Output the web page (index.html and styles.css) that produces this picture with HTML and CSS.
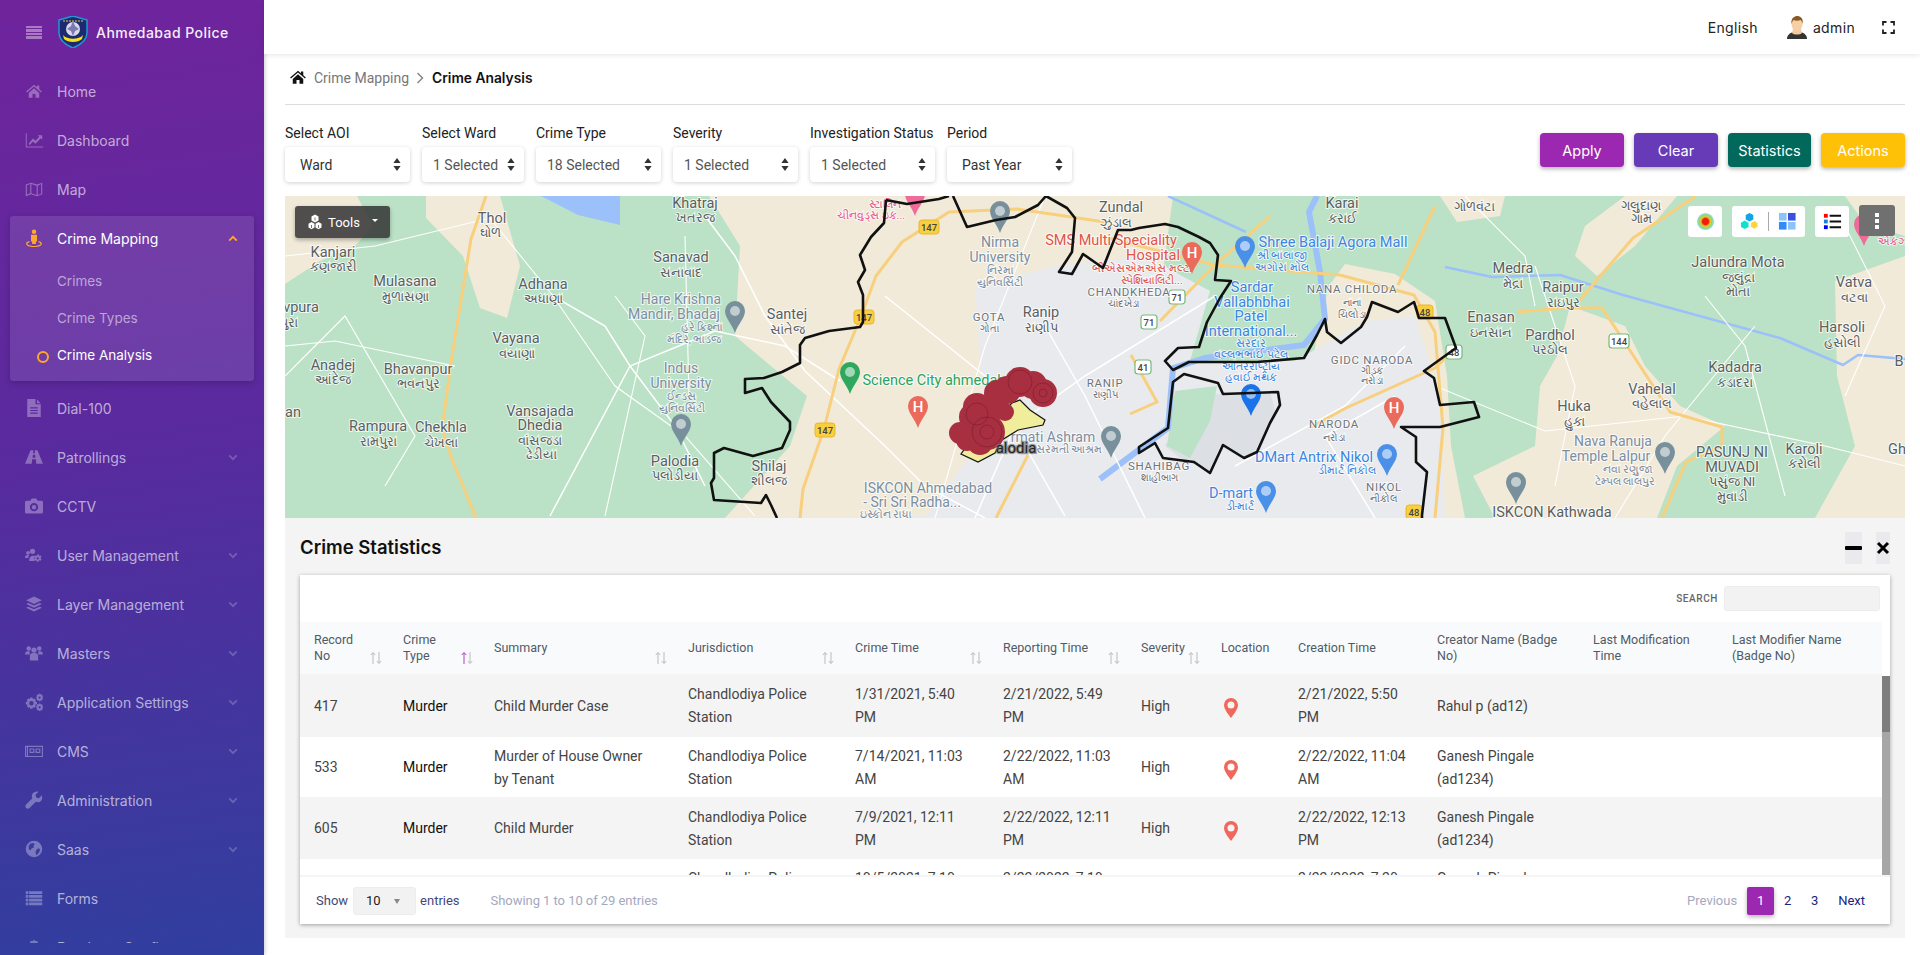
FILE: index.html
```html
<!DOCTYPE html>
<html lang="en">
<head>
<meta charset="utf-8">
<title>Crime Analysis</title>
<link rel="stylesheet" href="styles.css">
</head>
<body>
<svg class="defs" aria-hidden="true">
<defs>
<symbol id="i-home" viewBox="0 0 24 24"><path d="M12 3.500 1.500 12.600l1.200 1.400L12 6l9.300 8 1.200-1.400-3.500-3V4.500h-3v2.500zM5 14.600V21h5v-5h4v5h5v-6.400L12 8.300z"/></symbol>
<symbol id="i-chart" viewBox="0 0 24 24"><path d="M1 3h1.300v17.500H24V22H1zM5 16.500l5.500-6.500 3.500 3 5-5.500-2-2h6v6l-2-2-7 7.500-3.500-3-4.400 5z"/></symbol>
<symbol id="i-map" viewBox="0 0 24 24"><path fill-rule="evenodd" d="M1 6l7-2.500 8 2.500 7-2.500V19l-7 2.500L8 19l-7 2.500zm1.500 1v12.300L7 17.700V5.400zm6 -1.600v12.300l7 2.200V7.600zm8.500 2.200v12.300l4.500-1.600V5.400z"/></symbol>
<symbol id="i-pin" viewBox="0 0 24 24"><circle cx="12" cy="3.500" r="3"/><path d="M8 7.500h8v9h-1.500V20h-5v-3.500H8z"/><path d="M6 16c-3 .8-4.500 2-4.500 3.500C1.500 22 6 24 12 24s10.500-2 10.500-4.500c0-1.500-1.500-2.700-4.500-3.500v1.500c1.500.5 2.700 1.100 2.700 2 0 1.500-4 3-8.700 3s-8.700-1.500-8.700-3c0-.9 1.200-1.500 2.700-2z"/></symbol>
<symbol id="i-file" viewBox="0 0 24 24"><path fill-rule="evenodd" d="M3 0h11v7h7v17H3zm4 11v1.500h10V11zm0 3.500V16h10v-1.500zm0 3.500v1.500h10V18zM16 .5l5 5h-5z"/></symbol>
<symbol id="i-road" viewBox="0 0 24 24"><path d="M7.500 3h3.500l-.3 4h2.600L13 3h3.500L24 21h-9l-.5-6h-5L9 21H0zM10.500 9l-.4 4h3.800l-.4-4z"/></symbol>
<symbol id="i-cam" viewBox="0 0 24 24"><path fill-rule="evenodd" d="M2 5h5l2-3h6l2 3h5a2 2 0 0 1 2 2v13a2 2 0 0 1-2 2H2a2 2 0 0 1-2-2V7a2 2 0 0 1 2-2zm10 3a5.500 5.500 0 1 0 0 11 5.500 5.500 0 0 0 0-11zm0 2.500a3 3 0 1 1 0 6 3 3 0 0 1 0-6z"/></symbol>
<symbol id="i-ucog" viewBox="0 0 24 24"><circle cx="4" cy="9" r="2.500"/><circle cx="10" cy="7" r="3.500"/><path d="M0 16c0-2.500 1-4 3.500-4h2c-.5 1-1 2-1 4zM5.500 20c0-4 1.500-7 4.500-7h4c-2 2-2.500 5-1 7z"/><path fill-rule="evenodd" d="M18 11l1 2 2-.5 1 2-1.500 1.500 1.500 1.500-1 2-2-.5-1 2h-2l-1-2-2 .5-1-2 1.500-1.500L13 14.500l1-2 2 .5 1-2zm-1 4a1.500 1.500 0 1 0 0 3 1.500 1.500 0 0 0 0-3z"/></symbol>
<symbol id="i-layers" viewBox="0 0 24 24"><path d="M12 2l10.500 5L12 12 1.500 7z"/><path d="M4.500 10.500 12 14l7.500-3.500 3 1.500L12 17 1.500 12z"/><path d="M4.500 15.500 12 19l7.500-3.500 3 1.500L12 22 1.500 17z"/></symbol>
<symbol id="i-users" viewBox="0 0 24 24"><circle cx="5" cy="6" r="3"/><circle cx="19" cy="6" r="3"/><circle cx="12" cy="8" r="3.500"/><path d="M0 14c0-3 1.500-4.500 4-4.500h2.500C6 11 6 12 6.500 14zM17.500 14c.5-2 .5-3 0-4.500H20c2.500 0 4 1.500 4 4.500zM6.500 22v-6c0-2.500 1.500-4 4-4h3c2.500 0 4 1.500 4 4v6z"/></symbol>
<symbol id="i-cogs" viewBox="0 0 24 24"><path fill-rule="evenodd" d="M7 6h3l.5 2 2-.7 2 2-.9 2 2.400.7v3l-2.400.7.900 2-2 2-2-.8-.5 2.100H7l-.5-2.100-2 .8-2-2 .9-2L1 15v-3l2.400-.7-.9-2 2-2 2 .7zm1.500 4.500a3 3 0 1 0 0 6 3 3 0 0 0 0-6z"/><path fill-rule="evenodd" d="M18.500 1h2l.3 1.300 1.300-.5 1.400 1.400-.6 1.300 1.100.5v2l-1.100.5.600 1.300-1.400 1.400-1.300-.5-.3 1.300h-2l-.3-1.300-1.300.5-1.400-1.400.6-1.300-1.100-.5v-2l1.100-.5-.6-1.300 1.400-1.400 1.300.5zm1 3.500a1.500 1.500 0 1 0 0 3 1.500 1.500 0 0 0 0-3z"/><path fill-rule="evenodd" d="M18.500 14h2l.3 1.300 1.300-.5 1.400 1.400-.6 1.300 1.100.5v2l-1.100.5.600 1.300-1.400 1.400-1.300-.5-.3 1.300h-2l-.3-1.300-1.300.5-1.400-1.400.6-1.300-1.100-.5v-2l1.100-.5-.6-1.300 1.400-1.400 1.300.5zm1 3.500a1.500 1.500 0 1 0 0 3 1.500 1.500 0 0 0 0-3z"/></symbol>
<symbol id="i-news" viewBox="0 0 24 24"><path fill-rule="evenodd" d="M0 5h24v15H0zm1.500 1.500v12h1v-12zm2.500 0v12h18.500v-12zm2 2h6.500v6H6zm8 0h6.500v6H14zM7.500 10v3H11v-3zm8 0v3H19v-3z"/></symbol>
<symbol id="i-wrench" viewBox="0 0 24 24"><path d="M22.500 5.500l-4 4-3.500-1-1-3.500 4-4C14.500.300 11 1.500 9.800 4c-1 2-.8 4 0 5.500L1.500 18c-1.500 1.500-1.200 3.300 0 4.500s3 1.500 4.500 0l8.500-8.300c1.500.8 3.500 1 5.500 0 2.500-1.200 3.700-4.700 2.500-8.700z"/></symbol>
<symbol id="i-globe" viewBox="0 0 24 24"><path fill-rule="evenodd" d="M12 1a11 11 0 1 0 0 22 11 11 0 0 0 0-22zM7 5l4-1 2 2-2 2 1 2-3 1-2 3-2-2V8zm9 7l3-1 1 3-3 5-2 1-1-4z"/></symbol>
<symbol id="i-list" viewBox="0 0 24 24"><path d="M1 3h3.500v3.500H1zM5.500 3H23v3.500H5.500zM1 8h3.500v3.500H1zM5.500 8H23v3.500H5.500zM1 13h3.500v3.500H1zM5.500 13H23v3.500H5.500zM1 18h3.500v3.500H1zM5.500 18H23v3.500H5.500z"/></symbol>
<symbol id="i-db" viewBox="0 0 24 24"><path d="M12 2l1.500 2h3l.5 2.500 3 1 -.5 3 2.500 2-2.500 2 .5 3H3.500l.5-3-2.500-2 2.500-2-.5-3 3-1L7.500 4h3z"/></symbol>
<symbol id="i-down" viewBox="0 0 12 8"><path d="M1.500 1.500 6 6l4.500-4.500" fill="none" stroke="currentColor" stroke-width="2.200"/></symbol>
<symbol id="i-up" viewBox="0 0 12 8"><path d="M1.500 6.500 6 2l4.500 4.500" fill="none" stroke="currentColor" stroke-width="2.200"/></symbol>
<symbol id="i-updown" viewBox="0 0 10 16"><path d="M5 0 9.500 6H.5zM5 16 .5 10h9z"/></symbol>
<symbol id="i-sort" viewBox="0 0 14 14"><path d="M4 13V1.800M1.800 4 4 1.500 6.200 4" fill="none" stroke="currentColor" stroke-width="1"/><path d="M10 1v11.200M7.800 10l2.200 2.500 2.200-2.500" fill="none" stroke="#bbb" stroke-width="1"/></symbol>
<symbol id="i-loc" viewBox="0 0 14 20"><path fill-rule="evenodd" d="M7 0a7 7 0 0 1 7 7c0 4-4 9-7 13-3-4-7-9-7-13a7 7 0 0 1 7-7zm0 3.500a3.500 3.500 0 1 0 0 7 3.500 3.500 0 0 0 0-7z"/></symbol>
<symbol id="m-pin" viewBox="0 0 20 32"><path d="M10 0a10 10 0 0 1 10 10c0 7-7 13-10 22C7 23 0 17 0 10A10 10 0 0 1 10 0z"/><circle cx="10" cy="10" r="5" fill="#fff" fill-opacity=".55"/></symbol>
<symbol id="m-pin-h" viewBox="0 0 20 32"><path d="M10 0a10 10 0 0 1 10 10c0 7-7 13-10 22C7 23 0 17 0 10A10 10 0 0 1 10 0z"/></symbol>
</defs>
</svg>

<div class="app">
<aside class="sidebar">
  <div class="brand">
    <span class="burger"><i></i><i></i><i></i><i></i></span>
    <svg class="crest" viewBox="0 0 30 32"><path d="M1 4 15 0l14 4v13c0 7-7 12-14 15C8 29 1 24 1 17z" fill="#1f2a6e" stroke="#1b9ad6" stroke-width="1.500"/><circle cx="15" cy="13" r="7" fill="#d8d8ee"/><path d="M15 5l2 5 4 3-4 2-2 5-2-5-4-2 4-3z" fill="#7a7ab0"/><path d="M5 19c4 5 16 5 20 0l-1 4c-4 4-14 4-18 0z" fill="#f2e21b"/><path d="M5 5l20 0" stroke="#e0d040" stroke-width="1" stroke-dasharray="2 1"/></svg>
    <span class="brand-name">Ahmedabad Police</span>
  </div>
  <nav class="nav">
    <a class="item"><svg class="ic"><use href="#i-home"/></svg><span>Home</span></a>
    <a class="item"><svg class="ic"><use href="#i-chart"/></svg><span>Dashboard</span></a>
    <a class="item"><svg class="ic"><use href="#i-map"/></svg><span>Map</span></a>
    <div class="group">
      <a class="item active"><svg class="ic"><use href="#i-pin"/></svg><span>Crime Mapping</span><svg class="chev"><use href="#i-up"/></svg></a>
      <ul class="sub">
        <li>Crimes</li>
        <li>Crime Types</li>
        <li class="current">Crime Analysis</li>
      </ul>
    </div>
    <a class="item"><svg class="ic"><use href="#i-file"/></svg><span>Dial-100</span></a>
    <a class="item"><svg class="ic"><use href="#i-road"/></svg><span>Patrollings</span><svg class="chev"><use href="#i-down"/></svg></a>
    <a class="item"><svg class="ic"><use href="#i-cam"/></svg><span>CCTV</span></a>
    <a class="item"><svg class="ic"><use href="#i-ucog"/></svg><span>User Management</span><svg class="chev"><use href="#i-down"/></svg></a>
    <a class="item"><svg class="ic"><use href="#i-layers"/></svg><span>Layer Management</span><svg class="chev"><use href="#i-down"/></svg></a>
    <a class="item"><svg class="ic"><use href="#i-users"/></svg><span>Masters</span><svg class="chev"><use href="#i-down"/></svg></a>
    <a class="item"><svg class="ic"><use href="#i-cogs"/></svg><span>Application Settings</span><svg class="chev"><use href="#i-down"/></svg></a>
    <a class="item"><svg class="ic"><use href="#i-news"/></svg><span>CMS</span><svg class="chev"><use href="#i-down"/></svg></a>
    <a class="item"><svg class="ic"><use href="#i-wrench"/></svg><span>Administration</span><svg class="chev"><use href="#i-down"/></svg></a>
    <a class="item"><svg class="ic"><use href="#i-globe"/></svg><span>Saas</span><svg class="chev"><use href="#i-down"/></svg></a>
    <a class="item"><svg class="ic"><use href="#i-list"/></svg><span>Forms</span></a>
    <a class="item"><svg class="ic"><use href="#i-db"/></svg><span>Database Configurator</span></a>
  </nav>
</aside>

<main class="main">
  <header class="topbar">
    <span class="lang">English</span>
    <span class="user">
      <svg class="avatar" viewBox="0 0 20 23"><path d="M0 23c0-4 3-6 6-7h8c3 1 6 3 6 7z" fill="#333"/><path d="M6 13h8l1 4c-2 2-8 2-10 0z" fill="#f3c9a0"/><ellipse cx="10" cy="8" rx="5.500" ry="7" fill="#f6cfa6"/><path d="M4.500 8C3.500 2 8 0 10 0s7 1 5.500 8c-.5-2-1-3.500-2-4-2 1-5 1-7 0-1 1-1.500 2-2 4z" fill="#8a5a20"/></svg>
      admin
    </span>
    <svg class="fullscreen" viewBox="0 0 13 13"><path d="M1 4.500V1h3.500M8.500 1H12v3.500M12 8.500V12H8.500M4.500 12H1V8.500" fill="none" stroke="#222" stroke-width="1.800"/></svg>
  </header>

  <div class="content">
    <div class="crumbs">
      <svg class="crumb-home"><use href="#i-home"/></svg>
      <span class="crumb">Crime Mapping</span>
      <svg class="crumb-sep" viewBox="0 0 8 12"><path d="M1.500 1 6.500 6l-5 5" fill="none" stroke="#888" stroke-width="1.500"/></svg>
      <strong class="crumb-now">Crime Analysis</strong>
    </div>

    <div class="filters">
      <div class="field"><label>Select AOI</label><div class="select dark"><span>Ward</span><svg class="updown"><use href="#i-updown"/></svg></div></div>
      <div class="field narrow"><label>Select Ward</label><div class="select"><span>1 Selected</span><svg class="updown"><use href="#i-updown"/></svg></div></div>
      <div class="field"><label>Crime Type</label><div class="select"><span>18 Selected</span><svg class="updown"><use href="#i-updown"/></svg></div></div>
      <div class="field"><label>Severity</label><div class="select"><span>1 Selected</span><svg class="updown"><use href="#i-updown"/></svg></div></div>
      <div class="field"><label>Investigation Status</label><div class="select"><span>1 Selected</span><svg class="updown"><use href="#i-updown"/></svg></div></div>
      <div class="field"><label>Period</label><div class="select dark"><span>Past Year</span><svg class="updown"><use href="#i-updown"/></svg></div></div>
      <div class="actions">
        <button class="btn purple">Apply</button>
        <button class="btn indigo">Clear</button>
        <button class="btn teal">Statistics</button>
        <button class="btn amber">Actions</button>
      </div>
    </div>

    <section class="map">
      <svg class="mapsvg" viewBox="0 0 1620 322" preserveAspectRatio="none">
        <rect width="1620" height="322" fill="#bbe2c6"/>
        <g fill="#f1ead9">
          <path d="M0 0H72L88 30 70 50 35 65 0 88z"/>
          <path d="M141 0H215L235 70 222 122 195 112 178 60 141 22z"/>
          <path d="M424 0H888L880 60 870 150 850 322H440L505 250 522 200 450 140 455 50z"/>
          <path d="M1040 95 1060 68 1110 78 1150 105 1162 180 1166 250 1180 322H1000z"/>
          <path d="M1285 110 1340 130 1360 170 1395 210 1440 230 1392 270 1372 322H1210L1188 280 1250 250 1255 190 1272 160z"/>
          <path d="M1155 0H1220L1215 20 1172 26z"/>
          <path d="M1340 0H1392L1350 50 1312 80 1290 60 1300 30z"/>
          <path d="M1550 85 1620 60V322H1530L1570 250 1552 180z"/>
          <path d="M1560 0H1620V40L1580 28z"/>
        </g>
        <g fill="#bbe2c6">
          <path d="M950 0H1040L1050 60 1035 130 1020 150 930 150 945 90 905 40 900 0z"/>
          <path d="M870 130 890 115 905 145 880 175z"/>
        </g>
        <path d="M690 90 770 70 860 60 925 95 905 165 1010 165 1080 125 1130 120 1155 200 1160 322H480L640 320 700 240z" fill="#e8eaed"/>
        <path d="M905 200 985 195 990 215 975 255 958 262 935 250 925 275 895 262 880 250z" fill="#dcdfe4"/>
        <path d="M890 195 932 190 925 225 905 262 882 250z" fill="#bbe2c6"/>
        <path d="M256 0H335V29L293 19z" fill="#9cc0f9"/>
        <g fill="none" stroke="#9cc0f9" stroke-linejoin="round">
          <path stroke-width="6" d="M1032 0 1024 16 1035 76 1040 123 1019 149 920 162 888 172 883 232 851 256 815 283"/>
          <path stroke-width="2.500" d="M883 0 961 36M1160 71 1207 81 1275 79 1338 99 1495 142 1558 169 1573 159 1620 163"/>
        </g>
        <g fill="none" stroke="#fff" stroke-width="1.100">
          <path d="M0 60 90 50 205 22 268 100 330 190 400 240 470 320"/>
          <path stroke-width="1.500" d="M420 20 450 60 480 120 520 175 600 250 640 290 700 322M268 100 320 130 345 170 390 230 420 290M265 320 345 170 430 135 500 150 555 185"/>
          <path d="M0 150 50 145 170 170M400 40 404 200M100 290 130 240 60 120 0 180M320 320 360 140 330 100M760 0 700 150 650 322"/>
          <path stroke-width="1.500" d="M760 130 800 200 860 322M600 100 700 180 780 320M690 322 730 230 800 180 930 100M950 270 1060 210 1120 150M1090 322 1040 240 1110 200"/>
          <path d="M1150 190 1260 235 1400 220 1540 250 1620 270M1250 70 1290 190 1270 290M1420 100 1460 150 1500 300M1180 0 1240 60 1250 110M1470 130 1380 240 1330 322M1560 30 1600 110 1560 200"/>
        </g>
        <g fill="none" stroke="#f8cf7c" stroke-width="3" stroke-linejoin="round">
          <path d="M201 0 186 43 167 160 157 233 167 263 191 322"/>
          <path d="M820 26 732 13 664 16 617 46 591 80 575 123 554 173 539 233 518 293 515 322"/>
          <path d="M985 20 930 69 875 125M815 40 930 69 1055 79 1129 99 1150 136 1158 232 1150 322M1150 10 1113 89M1411 0 1348 42 1293 106M1233 116 1280 112 1317 112 1333 136 1359 176 1385 216 1437 231 1437 249 1401 266 1377 322M1171 152 1150 172 1061 212 1024 232M846 159 872 206 845 218M743 259 711 322"/>
        </g>
        <g class="sh-y">
          <g transform="translate(644 31)"><rect x="-10" y="-7" width="20" height="14" rx="3"/><text>147</text></g>
          <g transform="translate(579 121)"><rect x="-10" y="-7" width="20" height="14" rx="3"/><text>147</text></g>
          <g transform="translate(540 234)"><rect x="-10" y="-7" width="20" height="14" rx="3"/><text>147</text></g>
          <g transform="translate(1140 116)"><rect x="-8" y="-7" width="16" height="14" rx="3"/><text>48</text></g>
          <g transform="translate(1129 316)"><rect x="-8" y="-7" width="16" height="14" rx="3"/><text>48</text></g>
        </g>
        <g class="sh-w">
          <g transform="translate(892 101)"><rect x="-8" y="-7" width="16" height="14" rx="3"/><text>71</text></g>
          <g transform="translate(864 126)"><rect x="-8" y="-7" width="16" height="14" rx="3"/><text>71</text></g>
          <g transform="translate(858 171)"><rect x="-8" y="-7" width="16" height="14" rx="3"/><text>41</text></g>
          <g transform="translate(1169 156)"><rect x="-8" y="-7" width="16" height="14" rx="3"/><text>48</text></g>
          <g transform="translate(1334 145)"><rect x="-10" y="-7" width="20" height="14" rx="3"/><text>144</text></g>
        </g>

        <g class="lbl">
          <text x="207" y="22">Thol</text><text class="g" x="205" y="36">ઘોળ</text>
          <text x="48" y="56">Kanjari</text><text class="g" x="48" y="70">કણજારી</text>
          <text x="120" y="85">Mulasana</text><text class="g" x="120" y="100">મુળાસણા</text>
          <text x="258" y="88">Adhana</text><text class="g" x="258" y="102">અધાણા</text>
          <text x="410" y="7">Khatraj</text><text class="g" x="410" y="21">ખતરજ</text>
          <text x="396" y="61">Sanavad</text><text class="g" x="396" y="76">સનાવાદ</text>
          <text x="502" y="118">Santej</text><text class="g" x="502" y="133">સાંતેજ</text>
          <text x="16" y="111">vpura</text><text class="g" x="4" y="126">પુરા</text>
          <text x="231" y="142">Vayana</text><text class="g" x="232" y="157">વયાણા</text>
          <text x="48" y="169">Anadej</text><text class="g" x="48" y="183">આંદેજ</text>
          <text x="133" y="173">Bhavanpur</text><text class="g" x="133" y="187">ભવનપુર</text>
          <text x="255" y="215">Vansajada</text><text x="255" y="229">Dhedia</text><text class="g" x="255" y="244">વાંસજડા</text><text class="g" x="256" y="258">ઢેડીયા</text>
          <text x="93" y="230">Rampura</text><text class="g" x="93" y="245">રામપુરા</text>
          <text x="156" y="231">Chekhla</text><text class="g" x="156" y="246">ચેખલા</text>
          <text x="390" y="265">Palodia</text><text class="g" x="390" y="279">પલોડીયા</text>
          <text x="484" y="270">Shilaj</text><text class="g" x="484" y="284">શીલજ</text>
          <text x="8" y="216">an</text>
          <text x="756" y="116">Ranip</text><text class="g" x="756" y="131">રાણીપ</text>
          <text x="836" y="11">Zundal</text><text class="g" x="831" y="26">ઝુંડાલ</text>
          <text x="1057" y="7">Karai</text><text class="g" x="1057" y="22">કરાઈ</text>
          <text class="g" x="1189" y="10">ગોળવંટા</text>
          <text class="g" x="1356" y="9">ગલુદાણ</text><text class="g" x="1356" y="22">ગામ</text>
          <text x="1228" y="72">Medra</text><text class="g" x="1228" y="87">મેદ્રા</text>
          <text x="1278" y="91">Raipur</text><text class="g" x="1278" y="106">રાઇપુર</text>
          <text x="1453" y="66">Jalundra Mota</text><text class="g" x="1453" y="81">જલુંદ્રા</text><text class="g" x="1453" y="95">મોતા</text>
          <text x="1569" y="86">Vatva</text><text class="g" x="1569" y="101">વટવા</text>
          <text x="1557" y="131">Harsoli</text><text class="g" x="1557" y="146">હસોલી</text>
          <text x="1206" y="121">Enasan</text><text class="g" x="1206" y="136">ઇનસાન</text>
          <text x="1265" y="139">Pardhol</text><text class="g" x="1265" y="153">પરઠોલ</text>
          <text x="1450" y="171">Kadadra</text><text class="g" x="1450" y="186">કડાદરા</text>
          <text x="1367" y="193">Vahelal</text><text class="g" x="1367" y="207">વહેલાલ</text>
          <text x="1289" y="210">Huka</text><text class="g" x="1289" y="225">હુકા</text>
          <text x="1447" y="256">PASUNJ NI</text><text x="1447" y="271">MUVADI</text><text class="g" x="1447" y="285">પસુંજ NI</text><text class="g" x="1447" y="300">મુવાડી</text>
          <text x="1519" y="253">Karoli</text><text class="g" x="1519" y="267">કરોલી</text>
          <text x="1267" y="316">ISKCON Kathwada</text>
          <text x="1612" y="253">Gh</text><text x="1614" y="165">B</text>
        </g>
        <g class="lbl caps">
          <text x="704" y="121">GOTA</text><text class="g" x="704" y="132">ગોતા</text>
          <text x="1067" y="93">NANA CHILODA</text><text class="g" x="1067" y="106">નાના</text><text class="g" x="1067" y="118">ચિલોડા</text>
          <text x="844" y="96">CHANDKHEDA</text><text class="g" x="838" y="107">ચાંદખેડા</text>
          <text x="1087" y="164">GIDC NARODA</text><text class="g" x="1087" y="174">ગીડક</text><text class="g" x="1087" y="184">નરોડા</text>
          <text x="1049" y="228">NARODA</text><text class="g" x="1049" y="241">નરોડા</text>
          <text x="874" y="270">SHAHIBAG</text><text class="g" x="874" y="281">શાહીબાગ</text>
          <text x="1099" y="291">NIKOL</text><text class="g" x="1099" y="302">નીકોલ</text>
          <text x="820" y="187">RANIP</text><text class="g" x="820" y="198">રાણીપ</text>
        </g>
        <g class="lbl poi">
          <text x="396" y="103">Hare Krishna</text><text x="389" y="118">Mandir, Bhadaj</text><text class="g" x="417" y="131">હરે ક્રિશ્ના</text><text class="g" x="409" y="143">મંદિર, ભાડજ</text>
          <text x="396" y="172">Indus</text><text x="396" y="187">University</text><text class="g" x="396" y="200">ઈન્ડસ</text><text class="g" x="397" y="212">યુનિવર્સિટી</text>
          <text x="643" y="292">ISKCON Ahmedabad</text><text x="627" y="306">- Sri Sri Radha...</text><text class="g" x="601" y="318">ઇસ્કોન રાધા</text>
          <text x="715" y="46">Nirma</text><text x="715" y="61">University</text><text class="g" x="715" y="74">નિરમા</text><text class="g" x="715" y="86">યુનિવર્સિટી</text>
          <text x="1328" y="245">Nava Ranuja</text><text x="1321" y="260">Temple Lalpur</text><text class="g" x="1343" y="273">નવા રણુજા</text><text class="g" x="1340" y="285">ટેમ્પલ લાલપુર</text>
          <text x="768" y="241">rmati Ashram</text><text class="g" x="784" y="253">સરમતી આશ્રમ</text>
        </g>
        <g class="lbl blue">
          <text x="1048" y="46">Shree Balaji Agora Mall</text><text class="g" x="997" y="59">શ્રી બાલાજી</text><text class="g" x="997" y="71">અગોરા મોલ</text>
          <text x="967" y="91">Sardar</text><text x="967" y="106">Vallabhbhai</text><text x="966" y="120">Patel</text><text x="966" y="135">International...</text><text class="g" x="966" y="147">સરદાર</text><text class="g" x="966" y="158">વલ્લભભાઈ પટેલ</text><text class="g" x="966" y="170">આંતરરાષ્ટ્રીય</text><text class="g" x="966" y="181">હવાઈ મથક</text>
          <text x="1029" y="261">DMart Antrix Nikol</text><text class="g" x="1062" y="274">ડીમાર્ટ નિકોલ</text>
          <text x="946" y="297">D-mart</text><text class="g" x="955" y="310">ડી-માર્ટ</text>
        </g>
        <g class="lbl red">
          <text x="826" y="44">SMS Multi Speciality</text><text x="868" y="59">Hospital</text><text class="g" x="857" y="72">બીએસએમએસ મલ્ટી</text><text class="g" x="867" y="84">સ્પેશિયાલિટી...</text>
        </g>
        <g class="lbl pink">
          <text class="g" x="586" y="19">ચીનવુડ્સ ઇક...</text><text class="g" x="600" y="8">સ્ટાલિન</text>
          <text class="g" x="1610" y="45">એકઝો</text>
        </g>
        <g class="lbl green"><text x="657" y="184">Science City ahmedabad</text></g>

        <g fill="#78909c">
          <use href="#m-pin" x="705" y="5" width="20" height="32"/>
          <use href="#m-pin" x="440" y="105" width="20" height="32"/>
          <use href="#m-pin" x="386" y="218" width="20" height="32"/>
          <use href="#m-pin" x="816" y="230" width="20" height="32"/>
          <use href="#m-pin" x="1370" y="246" width="20" height="32"/>
          <use href="#m-pin" x="1221" y="276" width="20" height="32"/>
        </g>
        <use href="#m-pin" x="555" y="166" width="20" height="32" fill="#2fa85f"/>
        <g fill="#ea6a5b">
          <use href="#m-pin-h" x="623" y="200" width="20" height="32"/>
          <use href="#m-pin-h" x="897" y="46" width="20" height="32"/>
          <use href="#m-pin-h" x="1099" y="201" width="20" height="32"/>
        </g>
        <g fill="#4a90e8">
          <use href="#m-pin" x="950" y="40" width="20" height="32"/>
          <use href="#m-pin" x="1092" y="248" width="20" height="32"/>
          <use href="#m-pin" x="971" y="285" width="20" height="32"/>
        </g>
        <use href="#m-pin" x="956" y="188" width="20" height="32" fill="#1a73e8"/>
        <g fill="#ee6b9a">
          <use href="#m-pin-h" x="620" y="-12" width="20" height="32"/>
          <use href="#m-pin-h" x="1569" y="18" width="20" height="32"/>
        </g>
        <g class="pin-h">
          <text x="633" y="211">H</text><text x="907" y="57">H</text><text x="1109" y="212">H</text>
        </g>

        <g fill="none" stroke="#111" stroke-width="2.600" stroke-linejoin="round">
          <path d="M601 4 599 27 586 41 575 59 580 74 573 86 578 99 578 126 575 131 544 135 520 142 515 149 515 167 497 176 479 182 460 183 460 197 477 192 486 206 505 226 505 234 497 252 468 260 439 252 429 257 429 282 426 287 429 304 476 307 481 299 486 309 492 322"/>
          <path d="M601 4 622 8 654 3 664 0M668 0 682 31 711 24 730 21 753 9 761 0 782 12 790 22 787 56 774 76 787 78 798 58 818 72 833 34 846 34 854 32 880 28 893 31 914 41 925 47 933 59 930 84 946 85 935 102 922 126 914 151 893 152 880 165 888 174 904 166 972 166 1019 162 1032 139 1040 123 1042 136 1056 147 1066 139 1076 131 1082 121 1087 106 1113 116 1129 106 1134 122 1160 122 1171 152 1139 175 1149 182 1155 209 1189 206 1194 221 1155 231 1116 231 1131 241 1131 266 1142 276 1137 319 1137 322"/>
          <path d="M888 186 899 178 933 187 938 198 993 196 995 209 985 227 972 256 959 262 938 249 925 277 909 266 878 262 870 247 854 257 854 251 883 232z"/>
        </g>

        <path d="M727 207 735 204 745 214 760 224 758 229 733 234 717 244 710 257 693 266 676 258 682 250z" fill="#f0ee9b" stroke="#111" stroke-width="1.200"/>
        <g fill="#a82f40">
          <circle cx="735" cy="186" r="15"/><circle cx="748" cy="189" r="14"/><circle cx="758" cy="197" r="14"/><circle cx="722" cy="194" r="14"/><circle cx="712" cy="197" r="13"/><circle cx="692" cy="211" r="14"/><circle cx="705" cy="212" r="14"/><circle cx="702" cy="236" r="18"/><circle cx="675" cy="237" r="11"/><circle cx="682" cy="244" r="11"/><circle cx="688" cy="221" r="14"/><circle cx="695" cy="246" r="13"/><circle cx="720" cy="216" r="9"/>
        </g>
        <g fill="none" stroke="#7d2030" stroke-width=".7">
          <circle cx="702" cy="236" r="15"/><circle cx="702" cy="236" r="7"/><circle cx="758" cy="197" r="10"/><circle cx="758" cy="197" r="4"/><circle cx="692" cy="218" r="11"/><circle cx="735" cy="186" r="12"/>
        </g>
        <text class="chand" x="731" y="252">alodia</text>
      </svg>

      <button class="tools">
        <svg class="tools-ic" viewBox="0 0 16 16"><path d="M8 .5l3.500 2v4L8 8.500l-3.500-2v-4z" fill="#fff"/><path d="M4.500 8l3 1.800v3.700l-3 1.800-3-1.800V9.800zM11.500 8l3 1.800v3.700l-3 1.800-3-1.800V9.800z" fill="#fff"/><path d="M8 3.500v3M4.500 11v3M11.500 11v3" stroke="#555" stroke-width=".8"/></svg>
        Tools<i class="caret"></i>
      </button>
      <div class="maptools">
        <div class="mbox"><svg class="mi" viewBox="0 0 20 20"><defs><radialGradient id="heat"><stop offset=".35" stop-color="#f21c10"/><stop offset=".55" stop-color="#f8c020"/><stop offset=".75" stop-color="#7fe07a"/><stop offset="1" stop-color="#9fd8f0"/></radialGradient></defs><circle cx="10" cy="10" r="9" fill="url(#heat)"/></svg></div>
        <div class="mbox wide">
          <svg class="mi" viewBox="0 0 20 20"><path d="M10 1l4 2.200v4.600L10 10 6 7.800V3.200z" fill="#0ea5e9"/><path d="M5 9l4 2.200v4.600L5 18l-4-2.200v-4.600z" fill="#12e0c8"/><path d="M15 9.500l3.500 2v4l-3.500 2-3.500-2v-4z" fill="#fcd53f"/></svg>
          <i class="vsep"></i>
          <svg class="mi" viewBox="0 0 20 20"><rect x="1" y="1" width="8" height="8" fill="#8bc4fb"/><rect x="10.500" y="1" width="8" height="8" fill="#3c50e0"/><rect x="1" y="10.500" width="8" height="8" fill="#2f8cf8"/><rect x="10.500" y="10.500" width="8" height="8" fill="#8bc4fb"/></svg>
        </div>
        <div class="mbox"><svg class="mi" viewBox="0 0 20 20"><rect x="1" y="2" width="4" height="4" fill="#f00"/><rect x="1" y="8" width="4" height="4" fill="#1580e0"/><rect x="1" y="14" width="4" height="4" fill="#00f"/><path d="M7 4h12M7 10h12M7 16h12" stroke="#111" stroke-width="2"/></svg></div>
        <div class="mbox more"><i></i><i></i><i></i></div>
      </div>
    </section>

    <section class="stats">
      <div class="stats-head">
        <h2>Crime Statistics</h2>
        <div class="winbtns">
          <span class="win min"><i></i></span>
          <span class="win close"><svg viewBox="0 0 14 14"><path d="M2 2l10 10M12 2 2 12" stroke="#000" stroke-width="3"/></svg></span>
        </div>
      </div>
      <div class="card">
        <div class="searchrow"><label>SEARCH</label><span class="search"></span></div>
        <div class="tablewrap">
          <div class="tablescroll">
            <table>
              <colgroup><col class="c1"><col class="c2"><col class="c3"><col class="c4"><col class="c5"><col class="c6"><col class="c7"><col class="c8"><col class="c9"><col class="c10"><col class="c11"><col class="c12"></colgroup>
              <thead><tr>
                <th>Record No<svg class="sort"><use href="#i-sort"/></svg></th>
                <th>Crime Type<svg class="sort on"><use href="#i-sort"/></svg></th>
                <th>Summary<svg class="sort"><use href="#i-sort"/></svg></th>
                <th>Jurisdiction<svg class="sort"><use href="#i-sort"/></svg></th>
                <th>Crime Time<svg class="sort"><use href="#i-sort"/></svg></th>
                <th>Reporting Time<svg class="sort"><use href="#i-sort"/></svg></th>
                <th>Severity<svg class="sort"><use href="#i-sort"/></svg></th>
                <th>Location</th>
                <th>Creation Time</th>
                <th>Creator Name (Badge No)</th>
                <th>Last Modification Time</th>
                <th>Last Modifier Name (Badge No)</th>
              </tr></thead>
              <tbody>
                <tr class="odd"><td>417</td><td class="strong">Murder</td><td>Child Murder Case</td><td>Chandlodiya Police Station</td><td>1/31/2021, 5:40 PM</td><td>2/21/2022, 5:49 PM</td><td>High</td><td><svg class="loc"><use href="#i-loc"/></svg></td><td>2/21/2022, 5:50 PM</td><td>Rahul p (ad12)</td><td></td><td></td></tr>
                <tr class="even"><td>533</td><td class="strong">Murder</td><td>Murder of House Owner by Tenant</td><td>Chandlodiya Police Station</td><td>7/14/2021, 11:03 AM</td><td>2/22/2022, 11:03 AM</td><td>High</td><td><svg class="loc"><use href="#i-loc"/></svg></td><td>2/22/2022, 11:04 AM</td><td>Ganesh Pingale (ad1234)</td><td></td><td></td></tr>
                <tr class="odd"><td>605</td><td class="strong">Murder</td><td>Child Murder</td><td>Chandlodiya Police Station</td><td>7/9/2021, 12:11 PM</td><td>2/22/2022, 12:11 PM</td><td>High</td><td><svg class="loc"><use href="#i-loc"/></svg></td><td>2/22/2022, 12:13 PM</td><td>Ganesh Pingale (ad1234)</td><td></td><td></td></tr>
                <tr class="even"><td>611</td><td class="strong">Murder</td><td>Murder</td><td>Chandlodiya Police Station</td><td>10/5/2021, 7:10 PM</td><td>2/22/2022, 7:19 PM</td><td>High</td><td><svg class="loc"><use href="#i-loc"/></svg></td><td>2/22/2022, 7:20 PM</td><td>Ganesh Pingale (ad1234)</td><td></td><td></td></tr>
              </tbody>
            </table>
          </div>
          <div class="scrollbar"><div class="thumb"></div></div>
        </div>
        <div class="tfoot">
          <span class="show">Show</span>
          <span class="len">10<i class="lencaret"></i></span>
          <span class="show">entries</span>
          <span class="info">Showing 1 to 10 of 29 entries</span>
          <div class="pager">
            <span class="prev">Previous</span>
            <span class="page on">1</span>
            <span class="page">2</span>
            <span class="page">3</span>
            <span class="next">Next</span>
          </div>
        </div>
      </div>
    </section>
  </div>
</main>
</div>
</body>
</html>
```

FILE: styles.css
```css
* { box-sizing: border-box; }
html, body { margin: 0; padding: 0; height: 955px; overflow: hidden; background: #fff; }
body { font-family: "Roboto", "Liberation Sans", sans-serif; font-size: 14px; color: #222; }
.defs { width: 0; height: 0; position: absolute; }
.app { display: flex; height: 955px; }

/* sidebar */
.sidebar { width: 264px; flex: none; height: 955px; background: linear-gradient(172deg, #70249c 0%, #5a2a9e 45%, #303f9f 100%); box-shadow: 1px 0 4px rgba(0,0,0,.2); font-family: "Inter", "Noto Sans", sans-serif; }
.brand { height: 54px; display: flex; align-items: center; padding: 10px 0 0 26px; color: #fff; }
.burger { width: 16px; height: 13px; display: flex; flex-direction: column; justify-content: space-between; margin-right: 16px; }
.burger i { display: block; height: 2.500px; background: rgba(255,255,255,.4); }
.crest { width: 30px; height: 32px; margin-right: 8px; }
.brand-name { font-size: 14px; font-weight: 500; color: #f5eef9; letter-spacing: .45px; }
.nav { height: 889px; overflow: hidden; padding-top: 15px; display: flex; flex-direction: column; gap: 5px; }
.item { height: 44px; flex: none; display: flex; align-items: center; padding-left: 25px; padding-right: 26px; color: rgba(255,255,255,.62); font-size: 14px; font-weight: 400; }
.item span { flex: 1; }
.ic { width: 18px; height: 18px; fill: rgba(255,255,255,.32); margin-right: 14px; flex: none; }
.chev { width: 10px; height: 7px; color: rgba(255,255,255,.22); flex: none; }
.group { margin: 0 10px; height: 165px; flex: none; background: rgba(255,255,255,.1); border-radius: 3px; box-shadow: 0 2px 6px rgba(0,0,0,.2); }
.group .item { padding-left: 15px; padding-right: 16px; }
.item.active { color: #fff; }
.item.active .ic { fill: #ffa726; }
.item.active .chev { color: #ffa726; }
.sub { list-style: none; margin: 0; padding: 2.500px 0 0; }
.sub li { height: 37px; line-height: 37px; padding-left: 47px; font-size: 13.500px; font-weight: 400; color: rgba(255,255,255,.55); position: relative; }
.sub li.current { color: #fff; }
.sub li.current::before { content: ""; position: absolute; left: 27px; top: 14px; width: 8px; height: 8px; border: 2px solid #ffa726; border-radius: 50%; }

/* main */
.main { flex: 1; min-width: 0; }
.topbar { height: 54px; display: flex; align-items: center; justify-content: flex-end; background: #fff; box-shadow: 0 1px 5px rgba(0,0,0,.1); padding-right: 25px; font-family: "Inter", "Noto Sans", sans-serif; font-size: 14px; letter-spacing: .35px; color: #222; position: relative; }
.lang { margin-right: 29px; }
.user { display: flex; align-items: center; gap: 6px; margin-right: 27px; }
.avatar { width: 20px; height: 23px; }
.fullscreen { width: 13px; height: 13px; }

.content { padding: 0 15px 0 21px; }
.crumbs { height: 51px; display: flex; align-items: center; border-bottom: 1px solid #ddd; font-size: 14px; padding-left: 4px; padding-bottom: 2px; }
.crumb-home { width: 18px; height: 18px; fill: #111; margin-right: 7px; margin-top: -3px; }
.crumb { color: #777; }
.crumb-sep { width: 8px; height: 12px; margin: 0 8px 0 7px; }
.crumb-now { font-family: "Inter", "Noto Sans", sans-serif; font-size: 13.800px; font-weight: 600; color: #111; }

.filters { display: flex; gap: 12px; height: 91px; padding-top: 19px; }
.field { width: 125px; display: flex; flex-direction: column; }
.field.narrow { width: 102px; }
.field label { height: 23px; line-height: 19px; white-space: nowrap; font-size: 14px; color: #222; }
.select { height: 35px; background: #fff; border-radius: 4px; box-shadow: 0 1px 4px rgba(0,0,0,.18); display: flex; align-items: center; justify-content: space-between; padding: 0 9px 0 11px; color: #555; font-size: 14px; }
.select.dark { color: #333; padding-left: 15px; }
.updown { width: 8px; height: 13px; fill: #333; }
.actions { margin-left: auto; display: flex; gap: 10px; padding-top: 9px; height: 43px; }
.btn { width: 84px; height: 34px; border: 0; border-radius: 4px; color: #fff; font-family: "Inter", "Noto Sans", sans-serif; font-size: 14.500px; font-weight: 400; box-shadow: 0 2px 4px rgba(0,0,0,.3); padding: 0; }
.btn.purple { background: #9c27b0; }
.btn.indigo { background: #673ab7; }
.btn.teal { background: #00695c; width: 83px; }
.btn.amber { background: #ffc107; }

/* map */
.map { position: relative; height: 322px; overflow: hidden; }
.mapsvg { display: block; width: 1620px; height: 322px; font-family: "Roboto", "Noto Sans", sans-serif; }
.lbl text { text-anchor: middle; dominant-baseline: central; font-size: 14.500px; fill: #5a5f62; paint-order: stroke; stroke: #fff; stroke-width: 2px; stroke-opacity: .75; }
.lbl text.g { font-size: 12.500px; }
.lbl.caps text { font-size: 11.500px; letter-spacing: .7px; fill: #70757a; }
.lbl.caps text.g { font-size: 10px; letter-spacing: 0; }
.lbl.poi text { fill: #7d8ea0; font-size: 14px; }
.lbl.poi text.g { font-size: 10.500px; }
.lbl.blue text { fill: #3d85e0; font-size: 14.500px; }
.lbl.blue text.g { font-size: 10.500px; }
.lbl.red text { fill: #e0544a; font-size: 14.500px; }
.lbl.red text.g { font-size: 10.500px; }
.lbl.pink text, .lbl.pink text.g { fill: #e8588c; font-size: 11px; }
.lbl.green text { fill: #2aa35f; }
.sh-y rect { fill: #f9cf3f; stroke: #e8b830; }
.sh-w rect { fill: #fff; stroke: #7ab77a; stroke-width: 1.200; }
.sh-y text, .sh-w text { text-anchor: middle; dominant-baseline: central; font-size: 9.500px; font-weight: 500; fill: #444; }
.pin-h text { text-anchor: middle; dominant-baseline: central; font-size: 15px; font-weight: 500; fill: #fff; }
.chand { text-anchor: middle; dominant-baseline: central; font-size: 15px; font-weight: 400; fill: #222; paint-order: stroke; stroke: #777; stroke-width: 2.500px; stroke-opacity: .7; }
.tools { position: absolute; left: 10px; top: 10px; width: 95px; height: 32px; border: 0; border-radius: 3px; background: rgba(50,50,50,.85); color: #fff; font-family: "Roboto", sans-serif; font-size: 13px; display: flex; align-items: center; justify-content: center; gap: 5px; box-shadow: 0 2px 4px rgba(0,0,0,.3); padding: 0; }
.tools-ic { width: 16px; height: 16px; }
.caret { width: 0; height: 0; border-left: 3px solid transparent; border-right: 3px solid transparent; border-top: 3px solid #fff; margin-left: 7px; margin-top: -3px; }
.maptools { position: absolute; right: 10px; top: 10px; display: flex; gap: 10px; }
.mbox { width: 34px; height: 31px; background: #fff; border-radius: 3px; display: flex; align-items: center; justify-content: center; }
.mbox.wide { width: 73px; gap: 9px; }
.mi { width: 19px; height: 19px; flex: none; }
.vsep { width: 1px; height: 19px; background: #aaa; }
.mbox.more { width: 36px; background: #707070; flex-direction: column; gap: 2px; margin-top: -1px; }
.more i { width: 4px; height: 4px; background: #fff; display: block; }

/* stats */
.stats { background: #f4f4f4; height: 420px; padding: 0 15px; }
.stats-head { height: 57px; display: flex; align-items: center; justify-content: space-between; }
.stats-head h2 { margin: 0; font-family: "Inter", "Noto Sans", sans-serif; font-size: 18.500px; font-weight: 600; color: #111; margin-top: 1px; }
.winbtns { display: flex; gap: 14px; margin-top: 2px; }
.win { height: 32px; background: #e9e9ee; display: flex; align-items: center; justify-content: center; }
.win.min { width: 17px; }
.win.min i { width: 17px; height: 4px; border-radius: 1px; background: #000; }
.win.close { width: 14px; }
.win.close svg { width: 14px; height: 14px; }
.card { background: #fff; height: 349px; box-shadow: 0 1px 4px rgba(0,0,0,.35); }
.searchrow { height: 47px; display: flex; align-items: flex-start; justify-content: flex-end; padding: 11px 10px 0 0; }
.searchrow label { font-size: 10px; font-weight: 500; color: #666; letter-spacing: .6px; margin-right: 6px; line-height: 25px; }
.search { width: 156px; height: 25px; background: #f2f2f2; border: 1px solid #ececec; border-radius: 3px; }
.tablewrap { display: flex; height: 255px; border-bottom: 2px solid #f5f5f5; }
.tablescroll { width: 1582px; overflow: hidden; }
table { table-layout: fixed; width: 1582px; border-collapse: collapse; font-size: 14px; color: #444; }
.c1 { width: 89px; } .c2 { width: 91px; } .c3 { width: 194px; } .c4 { width: 167px; } .c5 { width: 148px; } .c6 { width: 138px; }
.c7 { width: 80px; } .c8 { width: 77px; } .c9 { width: 139px; } .c10 { width: 156px; } .c11 { width: 139px; } .c12 { width: 164px; }
thead tr { height: 52px; background: #f9fafb; }
th { position: relative; font-weight: 400; text-align: left; font-size: 12.500px; line-height: 16px; color: #4f5b67; padding: 0 20px 0 14px; }
td { padding: 2px 14px 0; line-height: 23px; vertical-align: middle; }
tr.odd { height: 62.500px; background: #f4f4f4; }
tr.even { height: 60px; background: #fff; }
.strong { color: #111; }
.sort { position: absolute; right: 6px; bottom: 9px; width: 14px; height: 14px; color: #bbb; }
.sort.on { color: #b040c8; }
.loc { width: 14px; height: 20px; fill: #f0675c; display: block; margin: 4px 0 0 3px; }
.scrollbar { width: 8px; margin-top: 54px; background: #a6a6a6; }
.thumb { height: 56px; background: #7d7d7d; }
.tfoot { height: 47px; display: flex; align-items: center; padding: 0 25px 0 16px; font-size: 13px; }
.show { color: #3f4a7a; }
.len { width: 63px; height: 28px; margin: 0 4px 0 5px; background: #f2f2f2; border: 1px solid #ececec; border-radius: 3px; display: flex; align-items: center; padding-left: 12px; color: #222; position: relative; }
.lencaret { position: absolute; right: 15px; top: 11px; width: 0; height: 0; border-left: 3.500px solid transparent; border-right: 3.500px solid transparent; border-top: 5px solid #888; }
.info { margin-left: 31px; color: #a4a8c0; letter-spacing: -.05px; }
.pager { margin-left: auto; display: flex; align-items: center; }
.prev { color: #a4a8c0; margin-right: 10px; }
.page { width: 27px; height: 28px; line-height: 28px; text-align: center; color: #1a237e; }
.page.on { background: #9c27b0; color: #fff; border-radius: 2px; box-shadow: 0 2px 4px rgba(0,0,0,.3); }
.next { color: #1a237e; margin-left: 10px; }
```
